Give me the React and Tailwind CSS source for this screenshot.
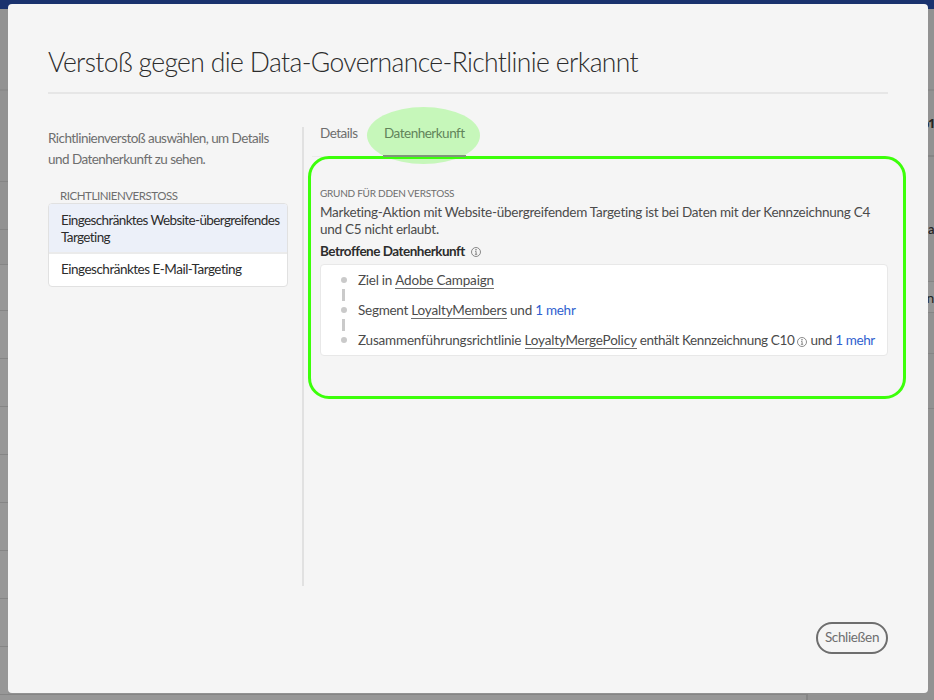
import React from "react";

function InfoIcon({ className }) {
  return (
    <svg viewBox="0 0 10 10" className={className} fill="none" stroke="#6e6e6e" strokeWidth="0.8">
      <circle cx="5" cy="5" r="4.5" />
      <path d="M4.1 4.4H5.1V7.2M3.9 7.3H6.2" />
      <circle cx="5" cy="2.8" r="0.35" fill="#6e6e6e" />
    </svg>
  );
}

function Underlined({ children }) {
  return <span className="inline-block h-[17px] border-b border-[#6e6e6e] leading-[17px] tracking-[-0.19px]">{children}</span>;
}

function Step({ last, children }) {
  return (
    <li className="flex h-[30px] items-start">
      <div className="flex w-[6px] flex-col items-start">
        <span className="mt-[3.5px] size-[6px] rounded-full bg-[#cacaca]" />
        {!last && <span className="ml-px mt-[6px] h-[12px] w-[3px] bg-[#cacaca]" />}
      </div>
      <div className="-mt-px ml-[11px] whitespace-nowrap leading-[17px]">{children}</div>
    </li>
  );
}

function LeftEdge() {
  return (
    <div className="flex h-[691px] w-[8px] shrink-0 flex-col bg-[#979797]">
      <div className="h-[82px] shrink-0 border-b-2 border-[#8b8b8b] bg-[#929292]" />
      <div className="h-[91px] shrink-0 border-b border-[#858585] bg-[#929292]" />
      <div className="h-[48px] shrink-0 border-b border-[#858585] bg-[#929292]" />
      <div className="h-[35px] shrink-0 border-b border-[#858585] bg-[#929292]" />
      <div className="h-[46px] shrink-0 border-b border-[#858585]" />
      {[0, 1, 2, 3, 4, 5, 6].map((n) => (
        <div key={n} className="h-[48px] shrink-0 border-b border-[#858585]" />
      ))}
    </div>
  );
}

function RightEdge() {
  return (
    <div className="flex h-[691px] w-[6px] shrink-0 flex-col overflow-hidden bg-[#929292] text-[#262626]">
      <div className="h-[82px] shrink-0 border-b-2 border-[#898989]" />
      <div className="flex h-[66px] shrink-0 items-center justify-end border-b-2 border-[#858585] pt-[2px] font-['Open_Sans'] text-[13px] font-bold tracking-[-1.5px]">b1</div>
      <div className="flex h-[125px] shrink-0 items-center border-b border-[#858585] pt-[22px] text-[13px] font-semibold">a</div>
      <div className="flex h-[31px] shrink-0 items-center justify-end border-b border-[#858585] bg-[#979797] text-[14px]">n</div>
      <div className="h-[41px] shrink-0 border-b border-[#858585]" />
      <div className="h-[55px] shrink-0 border-b border-[#858585]" />
    </div>
  );
}

export default function App() {
  return (
    <div className="flex h-[700px] w-[934px] flex-col overflow-hidden bg-[#929292] font-['Lato','Open_Sans',sans-serif] text-[13.5px] tracking-[-0.26px] text-[#4b4b4b]">
      <div className="h-[9px] shrink-0 bg-[#1a326e]" />
      <div className="flex h-[685px] shrink-0">
        <LeftEdge />
        <main className="-mt-[5px] flex h-[689px] w-[920px] shrink-0 flex-col rounded-[4px] bg-[#f5f5f5] px-[40px]">
          <h1 className="mt-[39px] h-[51px] whitespace-nowrap border-b-2 border-[#e6e6e6] text-[26.5px] font-light leading-[38px] tracking-[-0.63px] text-[#2c2c2c]">
            Verstoß gegen die Data-Governance-Richtlinie erkannt
          </h1>
          <div className="mt-[33px] flex h-[459px]">
            <section className="w-[240px] shrink-0">
              <p className="mt-px whitespace-nowrap leading-[21px] tracking-[-0.55px] text-[#6e6e6e]">
                Richtlinienverstoß auswählen, um Details
                <br />
                und Datenherkunft zu sehen.
              </p>
              <h2 className="mt-[18px] h-[15px] pl-[12px] text-[11.5px] leading-[16px] tracking-[-0.45px] text-[#6e6e6e]">RICHTLINIENVERSTOSS</h2>
              <ul className="h-[84px] overflow-hidden whitespace-nowrap rounded-[4px] border border-[#e1e1e1] bg-white leading-[17px] tracking-[-0.5px] text-[#2c2c2c]">
                <li className="h-[50px] border-b-2 border-[#ebebeb] bg-[#ecf0f9] pl-[12px] pt-[8px] tracking-[-0.62px]">
                  Eingeschränktes Website-übergreifendes
                  <br />
                  Targeting
                </li>
                <li className="pl-[12px] pt-[7px]">Eingeschränktes E-Mail-Targeting</li>
              </ul>
            </section>
            <div className="ml-[14px] h-[459px] w-[2px] shrink-0 bg-[#e1e1e1]" />
            <section className="relative ml-[16px] w-[568px] shrink-0">
              <div className="absolute -left-[12px] top-[29px] h-[243px] w-[598px] rounded-[21px] border-[3px] border-[#3cff0a]" />
              <div className="absolute left-[47px] -top-[20px] h-[57px] w-[113px] rounded-[50%] bg-[#3cff0a]/25" />
              <nav className="-ml-[8px] flex h-[30px] border-b border-[#ebebeb] pl-[8px] leading-[17px] tracking-[-0.5px] text-[#6e6e6e]">
                <span className="-mt-[2px] w-[63px]">Details</span>
                <span className="relative z-10 h-[30px] w-[83px] border-b-2 border-[#7f9679]"><span className="-mt-[2px] block whitespace-nowrap pl-px text-[#62845b]">Datenherkunft</span></span>
              </nav>
              <h3 className="mt-[29px] text-[10px] leading-[14px] tracking-[-0.25px] text-[#6e6e6e]">GRUND FÜR DDEN VERSTOSS</h3>
              <p className="mt-[4px] whitespace-nowrap leading-[17px]">
                Marketing-Aktion mit Website-übergreifendem Targeting ist bei Daten mit der Kennzeichnung C4
                <br />
                und C5 nicht erlaubt.
              </p>
              <div className="mt-[5px] flex h-[17px] items-center">
                <h4 className="w-[151px] shrink-0 whitespace-nowrap font-bold leading-[17px] tracking-[-0.5px] text-[#2c2c2c]">Betroffene Datenherkunft</h4>
                <InfoIcon className="size-[10px]" />
              </div>
              <ul className="mt-[4px] h-[92px] rounded-[4px] border border-[#e8e8e8] bg-white pl-[20px] pt-[8px]">
                <Step>Ziel in <Underlined>Adobe Campaign</Underlined></Step>
                <Step>Segment <Underlined>LoyaltyMembers</Underlined> und <a className="text-[#2f5fcf]">1 mehr</a></Step>
                <Step last>
                  <span className="tracking-[-0.2px]">Zusammenführungsrichtlinie <Underlined>LoyaltyMergePolicy</Underlined></span>
                  <span className="tracking-[-0.37px]"> enthält Kennzeichnung C10{" "}
                  <InfoIcon className="inline-block size-[10px]" /> und <a className="text-[#2f5fcf]">1 mehr</a></span>
                </Step>
              </ul>
            </section>
          </div>
          <button className="mt-[36px] h-[32px] w-[72px] shrink-0 self-end whitespace-nowrap rounded-full border-2 border-[#6e6e6e] pb-[2px] tracking-[-0.35px] text-[#6e6e6e]">
            Schließen
          </button>
        </main>
        <RightEdge />
      </div>
      <div className="h-[6px] w-[808px] shrink-0 border-r-2 border-t border-[#858585] bg-[#979797]" />
    </div>
  );
}
